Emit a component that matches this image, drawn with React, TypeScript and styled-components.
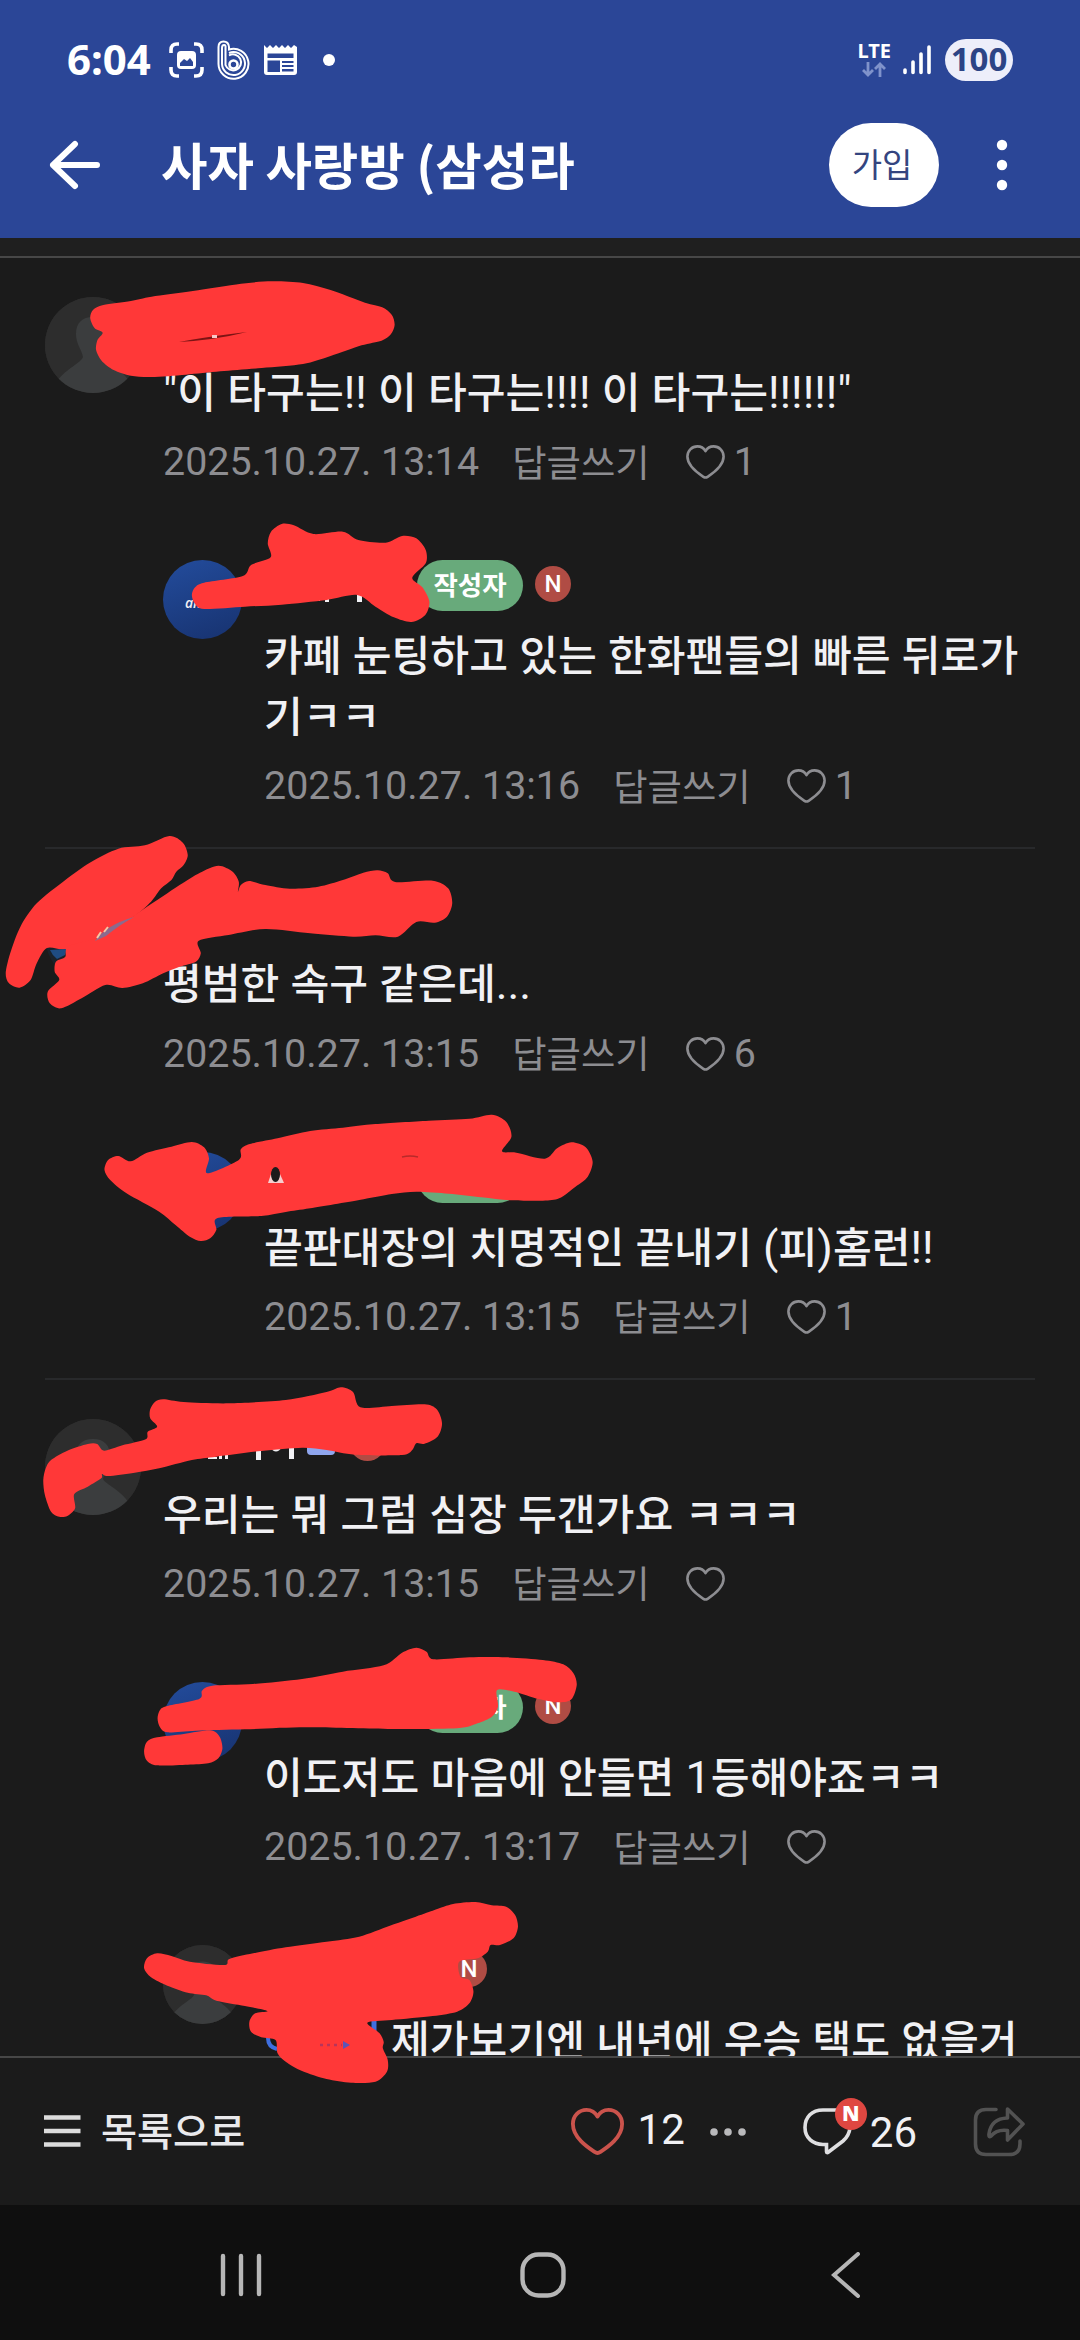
import React from 'react';
import styled, { createGlobalStyle } from 'styled-components';

const Global = createGlobalStyle`
  * { box-sizing: border-box; }
  body { margin: 0; background: #1b1b1b; }
`;

const korean = `"Noto Sans CJK KR", "Noto Sans", sans-serif`;
const latin = `Roboto, "Noto Sans CJK KR", sans-serif`;

const Screen = styled.div`
  position: relative;
  width: 1080px;
  height: 2340px;
  overflow: hidden;
  display: flex;
  flex-direction: column;
  background: #1b1b1b;
  font-family: ${korean};
  color: #f1f1f4;
  svg { display: block; flex: none; }
`;

const TopArea = styled.header`
  flex: none;
  height: 238px;
  background: #2b4697;
  color: #fff;
`;

const StatusBar = styled.div`
  height: 120px;
  padding: 0 67px 0 67px;
  display: flex;
  align-items: center;
`;

const Clock = styled.span`
  width: 102px;
  padding-bottom: 2px;
  font: 700 42px/50px "Noto Sans", sans-serif;
`;

const StatusIcons = styled.div`
  flex: 1;
  display: flex;
  align-items: center;
`;

const Network = styled.div`
  display: flex;
  flex-direction: column;
  align-items: center;
  gap: 3px;
  margin-right: 12px;
  padding-bottom: 1px;
  font: 700 20px/17px "Noto Sans", sans-serif;
`;

const Battery = styled.div`
  width: 68px;
  height: 42px;
  margin-left: 14px;
  border-radius: 21px;
  background: #edeefa;
  color: #2c4485;
  text-align: center;
  font: 700 33px/40px "Noto Sans", sans-serif;
`;

const TitleBar = styled.div`
  height: 90px;
  padding: 0 71px 0 49px;
  display: flex;
  align-items: center;
`;

const Title = styled.h1`
  flex: 1;
  margin: -5px 0 0 60px;
  font: 700 50.5px/84px ${korean};
`;

const JoinButton = styled.button`
  width: 110px;
  height: 84px;
  margin-right: 56px;
  padding: 0 4px 4px 0;
  border: 0;
  border-radius: 42px;
  background: #fff;
  color: #34457f;
  font: 400 33px/80px ${korean};
`;

const Comments = styled.main`
  flex: 1;
  min-height: 0;
  overflow: hidden;
`;

const Strip = styled.div`
  height: 20px;
  background: #1f1f1f;
  border-bottom: 2px solid #474747;
`;

const Thread = styled.section`
  margin: 0 45px;
  padding: 39px 0 37px;
  border-bottom: 2px solid #28292b;
`;

const Row = styled.article<{ $reply?: boolean }>`
  display: grid;
  grid-template-columns: ${(p) => (p.$reply ? '101px' : '118px')} 1fr;
  margin-left: ${(p) => (p.$reply ? '118px' : '0')};
  margin-top: ${(p) => (p.$reply ? '74px' : '0')};
`;

const Avatar = styled.div<{ $size: number; $tone: string }>`
  width: ${(p) => p.$size}px;
  height: ${(p) => p.$size}px;
  border-radius: 50%;
  overflow: hidden;
  background: ${(p) => p.$tone};
  display: flex;
  align-items: center;
  justify-content: center;
  font: italic 600 14px/20px "Open Sans", sans-serif;
`;

const TeamMark = styled.span`
  padding-top: 7px;
`;

const Head = styled.div`
  height: 62px;
  display: flex;
  align-items: flex-start;
`;

const NameSlot = styled.span<{ $width: number }>`
  width: ${(p) => p.$width}px;
`;

const AuthorBadge = styled.span`
  width: 106px;
  height: 51px;
  margin-right: 12px;
  border-radius: 26px;
  background: #68aa7b;
  color: #fff;
  text-align: center;
  font: 700 26.5px/48px ${korean};
`;

const NewMark = styled.span`
  width: 36px;
  height: 36px;
  margin-top: 6px;
  border-radius: 50%;
  background: #b04c44;
  color: #fff;
  text-align: center;
  font: 500 24px/37px ${latin};
`;

const Text = styled.p`
  margin: 0;
  font: 500 42.2px/61px ${korean};
  word-break: break-all;
`;

const LatinRun = styled.span`
  font-family: ${latin};
  font-weight: 400;
  font-size: 44.8px;
  line-height: 1px;
`;

const MentionSlot = styled.span`
  display: inline-block;
  width: 127px;
`;

const Meta = styled.div`
  height: 48px;
  margin-top: 18.2px;
  display: flex;
  align-items: center;
  color: #8d8d91;
  font: 400 39.4px/48px ${latin};
`;

const ReplyLink = styled.span`
  margin: -3px 36px 0 33px;
  font: 400 37.4px/48px ${korean};
`;

const LikeCount = styled.span`
  margin-left: 9px;
`;

const Toolbar = styled.footer`
  flex: none;
  height: 149px;
  padding: 0 55px 0 44px;
  border-top: 2px solid #474747;
  display: flex;
  align-items: center;
`;

const ListLink = styled.span`
  flex: 1;
  margin: -6px 0 0 20px;
  font: 500 39.2px/60px ${korean};
  color: #e9e9ec;
`;

const Count = styled.span<{ $drop?: number; $gap: number }>`
  margin: ${(p) => p.$drop ?? 0}px 0 0 ${(p) => p.$gap}px;
  font: 400 42px/50px ${latin};
`;

const BubbleWrap = styled.div`
  position: relative;
  margin-left: 56px;
`;

const BubbleBadge = styled.span`
  position: absolute;
  left: 32px;
  top: -10px;
  width: 32px;
  height: 32px;
  border-radius: 50%;
  background: #df4741;
  color: #fff;
  text-align: center;
  font: 800 21px/31px "Open Sans", sans-serif;
`;

const NavBar = styled.nav`
  flex: none;
  height: 135px;
  padding: 5px 0 0 220px;
  background: #0f0f0f;
  display: grid;
  grid-template-columns: 300px 311px auto;
  align-items: center;
`;

const MarkerLayer = styled.svg`
  position: absolute;
  inset: 0;
  pointer-events: none;
`;

function Mixed({ text }: { text: string }) {
  return (
    <>
      {text.split(/([ -~]+)/).map((part, i) => (i % 2 ? <LatinRun key={i}>{part}</LatinRun> : part))}
    </>
  );
}

function Heart({ width, height, color, stroke }: { width: number; height: number; color: string; stroke: number }) {
  return (
    <svg width={width} height={height} viewBox="0 0 39 34" preserveAspectRatio="none">
      <path
        d="M19.5 6.2C17.7 3 14.8 1.4 11.4 1.4C5.8 1.4 1.4 5.8 1.4 11.6C1.4 21.6 12.5 28.6 17.4 31.8Q19.5 33.2 21.6 31.8C26.5 28.6 37.6 21.6 37.6 11.6C37.6 5.8 33.2 1.4 27.6 1.4C24.2 1.4 21.3 3 19.5 6.2Z"
        fill="none" stroke={color} strokeWidth={stroke} strokeLinejoin="round"
      />
    </svg>
  );
}

function Person({ size }: { size: number }) {
  return (
    <svg width={size} height={size} viewBox="0 0 96 96">
      <rect width="96" height="96" fill="#2d2d2d" />
      <path d="M31 37C31 26 37 20 48 20S65 26 65 37C65 47 60 51 58 60C60 65 76 71 84 84V96H12V84C22 71 36 66 38 60C36 51 31 47 31 37Z" fill="#3b3d3e" />
    </svg>
  );
}

type Kind = 'person' | 'team' | 'photo';
type CommentProps = {
  kind: Kind; text: string; date: string; likes?: string; reply?: boolean;
  author?: boolean; fresh?: boolean; slot?: number; mention?: boolean;
};

function Comment({ kind, text, date, likes, reply, author, fresh, slot = 153, mention }: CommentProps) {
  const size = reply ? 79 : 96;
  const tone = kind === 'team' ? 'linear-gradient(160deg, #234c9c, #17326f)' : kind === 'photo' ? '#1a222a' : '#2d2d2d';
  return (
    <Row $reply={reply}>
      <Avatar $size={size} $tone={tone}>
        {kind === 'person' && <Person size={size} />}
        {kind === 'team' && <TeamMark>amsu</TeamMark>}
      </Avatar>
      <div>
        <Head>
          <NameSlot $width={slot} />
          {author && <AuthorBadge>작성자</AuthorBadge>}
          {fresh && <NewMark>N</NewMark>}
        </Head>
        <Text>{mention && <MentionSlot />}<Mixed text={text} /></Text>
        <Meta>
          {date}
          <ReplyLink>답글쓰기</ReplyLink>
          <Heart width={39} height={34} color="#8d8d91" stroke={2.6} />
          {likes && <LikeCount>{likes}</LikeCount>}
        </Meta>
      </div>
    </Row>
  );
}

type Stroke = { top: number; sx: number; points: string };

const strokes: Stroke[] = [
  { top: 250, sx: 2.904, points: '262,205 270,180 300,165 380,153 440,140 560,123 700,101 790,94 880,99 960,120 1060,158 1110,172 1138,195 1146,225 1135,253 1108,272 1050,286 960,318 880,342 760,354 640,364 540,374 440,381 380,377 330,360 295,332 279,300 283,270 298,248 275,235' },
  { top: 500, sx: 2.45, points: '470,285 478,262 500,248 595,228 615,195 663,172 656,130 664,95 690,72 720,76 768,102 840,95 878,120 945,128 985,108 1020,115 1043,150 1043,190 1010,233 1035,262 1052,305 1042,345 1008,366 965,352 920,320 875,285 800,300 690,314 600,320 500,327 478,312' },
  { top: 810, sx: 2.45, points: '14,490 25,430 50,350 90,280 160,210 220,158 290,116 355,106 415,78 448,98 460,135 450,165 432,185 420,210 395,235 370,275 330,318 290,345 262,370 235,400 160,418 115,414 90,460 75,510 48,533 22,520' },
  { top: 810, sx: 2.45, points: '310,332 360,290 400,258 440,225 490,188 535,167 570,185 585,215 583,245 590,225 610,213 650,225 710,236 780,230 840,210 890,188 925,181 950,190 968,216 1060,212 1098,235 1108,280 1095,320 1065,338 1020,336 975,380 920,376 865,380 760,370 650,357 560,375 487,392 492,430 480,455 440,470 400,490 350,520 300,534 258,525 200,565 150,595 122,580 117,545 145,510 134,485 137,455 160,440 165,410 235,385 265,360' },
  { top: 1090, sx: 2.45, points: '256,240 265,210 290,198 320,214 360,188 420,170 470,156 500,172 512,205 508,250 585,210 590,178 612,162 680,145 760,123 840,113 920,102 1050,92 1150,86 1205,74 1240,95 1253,140 1230,184 1265,188 1335,206 1365,175 1400,157 1435,172 1452,215 1440,260 1410,290 1370,325 1330,332 1250,331 1180,322 1100,311 1020,305 960,312 880,330 760,355 700,366 640,378 533,384 530,420 515,445 492,453 465,440 430,405 390,365 310,310 270,270' },
  { top: 1370, sx: 2.45, points: '106,330 112,295 125,270 165,242 215,222 238,222 255,242 300,226 357,208 362,185 385,170 368,145 368,118 380,95 400,88 450,96 560,100 700,90 800,66 835,52 865,66 883,112 960,108 1040,103 1070,118 1083,160 1072,200 1040,221 1020,220 1010,240 985,255 870,254 800,240 740,233 640,243 530,260 470,270 390,295 330,308 265,318 250,312 248,325 215,350 182,372 184,415 165,438 145,440 125,425 110,375' },
  { top: 1620, sx: 2.45, points: '386,295 392,270 410,258 488,237 495,212 520,197 620,192 740,177 840,155 940,136 985,98 1020,83 1045,95 1062,118 1150,112 1240,112 1330,120 1380,133 1405,160 1413,195 1400,238 1370,247 1320,237 1260,215 1218,210 1220,260 1205,290 1170,310 1120,325 950,327 750,322 600,328 480,332 410,337 392,322' },
  { top: 1620, sx: 2.45, points: '353,395 360,365 385,352 450,342 515,331 538,350 545,385 535,415 510,430 460,434 385,436 360,422' },
  { top: 1880, sx: 2.45, points: '353,265 360,235 385,220 420,228 465,245 550,255 562,237 620,220 700,202 800,185 880,170 960,135 1060,92 1110,72 1165,66 1205,76 1240,80 1262,105 1269,140 1258,175 1225,195 1202,195 1195,215 1170,235 1125,245 1128,290 1150,300 1160,335 1150,370 1120,395 1060,408 960,420 900,428 930,460 940,485 938,505 950,540 948,575 920,605 860,608 800,597 740,573 700,545 680,520 675,480 640,472 615,455 611,425 625,400 655,393 600,378 530,362 505,346 460,338 410,317 370,292' },
];

/* Closed Catmull-Rom curve through the outline points of a marker stroke. */
function outline({ top, sx, points }: Stroke) {
  const p = points.split(' ').map((s) => {
    const [x, y] = s.split(',').map(Number);
    return [x / sx, top + y / 3];
  });
  const n = p.length;
  let d = `M${p[0][0]} ${p[0][1]}`;
  for (let i = 0; i < n; i++) {
    const a = p[(i + n - 1) % n], b = p[i], c = p[(i + 1) % n], e = p[(i + 2) % n];
    d += `C${b[0] + (c[0] - a[0]) / 7} ${b[1] + (c[1] - a[1]) / 7} ${c[0] - (e[0] - b[0]) / 7} ${c[1] - (e[1] - b[1]) / 7} ${c[0]} ${c[1]}`;
  }
  return d + 'Z';
}

function Markers() {
  return (
    <MarkerLayer width="1080" height="2340" viewBox="0 0 1080 2340">
      <g fill="#f1f1f4">
        <path d="M318 599h2v2h-2zM325 597h4v5h-4zM357 595h5v7h-5z" />
        <path d="M208 1457h9v2h-9zM219 1455h3v4h-3zM225 1454h3v5h-3zM256 1449h5v11h-5zM289 1446h5v13h-5z" />
        <path d="M270 1447q6 9 12 0z" />
      </g>
      <path d="M307 1440h28v11q0 4 -4 4h-20q-4 0 -4-4z" fill="#8fa6ee" />
      <circle cx="367.500" cy="1443" r="18" fill="#b04c44" />
      <path d="M268 2038q0 9 9 11" fill="none" stroke="#3f6fe0" strokeWidth="4" />
      <path d="M374 2018v14" stroke="#3f6fe0" strokeWidth="5" />
      <g fill="#ff3838">
        {strokes.map((s, i) => <path key={i} d={outline(s)} />)}
      </g>
      <path d="M179 342Q205 337 247 332Q215 340 179 342Z" fill="#7c1414" />
      <rect x="212" y="335" width="5" height="3" fill="#f6c9c9" />
      <path d="M95 941Q106 925 134 917Q118 926 106 936Z" fill="#8c6a8d" />
      <path d="M97 938l4-6M104 932l4-5" stroke="#f3c9a6" strokeWidth="2" />
      <path d="M50 950L66 949L65 955L57 959Q52 955 50 950Z" fill="#1f4c82" />
      <path d="M268 1183l3-9h9l4 9z" fill="#f6cfcf" />
      <ellipse cx="275.500" cy="1174.500" rx="4.500" ry="7.500" fill="#1b1b1b" />
      <path d="M402 1157q8-2 16 0" stroke="#b82a2a" strokeWidth="1.500" fill="none" />
      <path d="M320 2045h22" stroke="#b8345a" strokeWidth="2.500" strokeDasharray="3 4" />
      <path d="M343 2041l7 4-7 4z" fill="#5b55b8" />
    </MarkerLayer>
  );
}

export default function App() {
  return (
    <Screen>
      <Global />
      <TopArea>
        <StatusBar>
          <Clock>6:04</Clock>
          <StatusIcons>
            <svg width="35" height="36" viewBox="0 0 35 36">
              <path d="M2 11V8Q2 2 8 2H10M25 2H27Q33 2 33 8V11M33 25V28Q33 34 27 34H25M10 34H8Q2 34 2 28V25" fill="none" stroke="#fff" strokeWidth="3.600" />
              <rect x="8" y="9" width="19" height="18" rx="4" fill="#fff" />
              <path d="M11 24V21L15 17L18 19L21 16L24 20V24Z" fill="#2b4697" />
            </svg>
            <svg width="33" height="40" viewBox="0 0 33 40" style={{ marginLeft: 13 }}>
              <g fill="none" stroke="#fff" strokeWidth="2">
                <path d="M1.500 23V7Q1.500 1.500 6.500 1.500T12 7V9.500A15 15 0 1 1 1.500 24Z" />
                <path d="M5 24V8Q5 5 7 5T8.500 8V25A8 8 0 1 0 12 15.500" />
                <path d="M5 24A11.500 11.500 0 1 0 12 13" />
                <circle cx="16.500" cy="24.500" r="4" strokeWidth="2.600" />
              </g>
            </svg>
            <svg width="33" height="30" viewBox="0 0 33 30" style={{ marginLeft: 14 }}>
              <path d="M0 0L3 3L6 0L9 3L12 0L15 3L18 0L21 3L24 0L27 3L30 0L33 2V27Q33 30 30 30H3Q0 30 0 27Z" fill="#fff" />
              <path d="M3.500 8.500H29.500V13H3.500ZM3.500 15.500H16V27H3.500ZM18 16h11.500v2H18ZM18 20h11.500v2H18ZM18 24h11.500v2.500H18Z" fill="#2b4697" />
            </svg>
            <svg width="12" height="12" style={{ marginLeft: 26 }}><circle cx="6" cy="6" r="6" fill="#fff" /></svg>
          </StatusIcons>
          <Network>
            LTE
            <svg width="24" height="15" viewBox="0 0 24 15">
              <path d="M6 0V13M1 8L6 13L11 8M18 15V2M13 7L18 2L23 7" fill="none" stroke="#8093cb" strokeWidth="2.800" />
            </svg>
          </Network>
          <svg width="28" height="30" viewBox="0 0 28 30">
            <path d="M2 25V27.500M10 17V27.500M18 9V27.500M26 2V27.500" stroke="#fff" strokeWidth="3.600" strokeLinecap="round" />
          </svg>
          <Battery>100</Battery>
        </StatusBar>
        <TitleBar>
          <svg width="52" height="50" viewBox="0 0 52 50">
            <path d="M26 4L4 25L26 46M4 25H48" fill="none" stroke="#fff" strokeWidth="6" strokeLinecap="round" strokeLinejoin="round" />
          </svg>
          <Title>사자 사랑방 (삼성라</Title>
          <JoinButton>가입</JoinButton>
          <svg width="14" height="52" viewBox="0 0 14 52" fill="#fff">
            <circle cx="7" cy="6" r="5.200" /><circle cx="7" cy="26" r="5.200" /><circle cx="7" cy="46" r="5.200" />
          </svg>
        </TitleBar>
      </TopArea>
      <Comments>
        <Strip />
        <Thread>
          <Comment kind="person" text={'"이 타구는!! 이 타구는!!!! 이 타구는!!!!!!"'} date="2025.10.27. 13:14" likes="1" />
          <Comment reply author fresh kind="team" text="카페 눈팅하고 있는 한화팬들의 빠른 뒤로가기ㅋㅋ" date="2025.10.27. 13:16" likes="1" />
        </Thread>
        <Thread>
          <Comment kind="photo" text="평범한 속구 같은데..." date="2025.10.27. 13:15" likes="6" />
          <Comment reply author kind="team" text="끝판대장의 치명적인 끝내기 (피)홈런!!" date="2025.10.27. 13:15" likes="1" />
        </Thread>
        <Thread>
          <Comment kind="person" text="우리는 뭐 그럼 심장 두갠가요 ㅋㅋㅋ" date="2025.10.27. 13:15" />
          <Comment reply author fresh kind="team" text="이도저도 마음에 안들면 1등해야죠ㅋㅋ" date="2025.10.27. 13:17" />
          <Comment reply fresh mention slot={187} kind="person" text="제가보기엔 내년에 우승 택도 없을거" date="2025.10.27. 13:18" />
        </Thread>
      </Comments>
      <Toolbar>
        <svg width="37" height="34" viewBox="0 0 37 34">
          <path d="M0 2.500H36.500M0 16H36.500M0 29.500H36.500" stroke="#dcdcdc" strokeWidth="4.600" />
        </svg>
        <ListLink>목록으로</ListLink>
        <Heart width={53} height={47} color="#cb534c" stroke={2.8} />
        <Count $gap={14} $drop={-4}>12</Count>
        <svg width="37" height="8" viewBox="0 0 37 8" style={{ marginLeft: 25 }} fill="#b9b9bb">
          <circle cx="4" cy="4" r="3.800" /><circle cx="18" cy="4" r="3.800" /><circle cx="32" cy="4" r="3.800" />
        </svg>
        <BubbleWrap>
          <svg width="50" height="48" viewBox="0 0 50 48">
            <path d="M34 2H20C9 2 2 9 2 19.500S10 36.500 20 36.500H23.500V43.500Q23.500 45.500 25.500 44L40 33Q46 28 47 20" fill="none" stroke="#dfdfe1" strokeWidth="3.600" />
          </svg>
          <BubbleBadge>N</BubbleBadge>
        </BubbleWrap>
        <Count $gap={17} $drop={2}>26</Count>
        <svg width="52" height="50" viewBox="0 0 52 50" style={{ marginLeft: 56 }}>
          <g fill="none" stroke="#525252" strokeWidth="3.600" strokeLinecap="round" strokeLinejoin="round">
            <path d="M23 2.500H13Q2.500 2.500 2.500 13V37Q2.500 47.500 13 47.500H36Q47 47.500 47 37V34" />
            <path d="M34.500 2L50 17L34.500 33V23.500Q24 22 18 29Q15.500 31 16 27Q18 11.500 34.500 11Z" />
          </g>
        </svg>
      </Toolbar>
      <NavBar>
        <svg width="42" height="44" viewBox="0 0 42 44">
          <path d="M3 3V41M21 3V41M39 3V41" stroke="#b6b6b6" strokeWidth="4.400" strokeLinecap="round" />
        </svg>
        <svg width="46" height="46" viewBox="0 0 46 46">
          <rect x="2.500" y="2.500" width="41" height="41" rx="16" fill="none" stroke="#b6b6b6" strokeWidth="4.400" />
        </svg>
        <svg width="30" height="46" viewBox="0 0 30 46">
          <path d="M27 2L3 23L27 44" fill="none" stroke="#b6b6b6" strokeWidth="4" strokeLinecap="round" />
        </svg>
      </NavBar>
      <Markers />
    </Screen>
  );
}
